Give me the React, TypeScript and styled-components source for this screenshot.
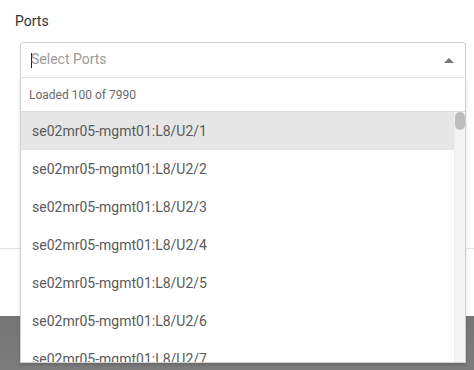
import React from 'react'
import styled, { createGlobalStyle } from 'styled-components'

const GlobalStyle = createGlobalStyle`
  html, body {
    margin: 0;
    padding: 0;
    background: #fff;
    font-family: Roboto, "Liberation Sans", sans-serif;
  }
`

const SPage = styled.div`
  width: 474px;
  height: 370px;
  overflow: hidden;
  display: flex;
  flex-direction: column;
  background: linear-gradient(#4b4b4b, #7c7c7c);
`

const SModal = styled.div`
  background: #fff;
  display: flex;
  flex-direction: column;
`

const SBody = styled.div`
  height: 249px;
  box-sizing: border-box;
  padding: 13px 8px 0 15px;
  border-bottom: 1px solid #e3e3e3;
`

const SFooter = styled.div`
  height: 67px;
`

const SLabel = styled.div`
  font-size: 14px;
  color: #333;
  line-height: 16px;
  margin-bottom: 13px;
`

const SField = styled.div`
  position: relative;
  margin-left: 5px;
  width: 446px;
`

const SControl = styled.div`
  height: 36px;
  box-sizing: border-box;
  border: 1px solid #cfcfcf;
  border-bottom-color: #e2e2e2;
  border-radius: 4px 4px 0 0;
  display: flex;
  align-items: center;
  padding: 0 11px 3px 10px;
`

const SCaret = styled.span`
  width: 1px;
  height: 15px;
  background: #222;
  margin: 3px -1px 0 0;
`

const SPlaceholder = styled.span`
  flex: 1;
  font-size: 14px;
  color: #9a9a9a;
`

const SArrow = styled.span`
  width: 0;
  height: 0;
  margin-top: 3px;
  border-left: 5px solid transparent;
  border-right: 5px solid transparent;
  border-bottom: 5px solid #777;
`

const SMenu = styled.div`
  position: absolute;
  top: 36px;
  left: 0;
  right: 0;
  height: 285px;
  background: #fff;
  box-sizing: border-box;
  border: 1px solid #cfcfcf;
  border-top: none;
  display: flex;
  flex-direction: column;
  box-shadow: 0 2px 3px rgba(0, 0, 0, 0.15);
`

const SMenuHeader = styled.div`
  height: 33px;
  flex: none;
  border-bottom: 1px solid #dcdcdc;
  display: flex;
  align-items: center;
  padding-left: 8px;
  font-size: 12px;
  color: #6a6a6a;
`

const SListWrap = styled.div`
  flex: 1;
  display: flex;
  overflow: hidden;
`

const SList = styled.div`
  flex: 1;
  display: flex;
  flex-direction: column;
`

const SOption = styled.div<{ $active?: boolean }>`
  height: 38px;
  flex: none;
  display: flex;
  align-items: center;
  padding-left: 11px;
  font-size: 14px;
  color: #5a5a5a;
  background: ${p => (p.$active ? '#e6e6e6' : '#fff')};
`

const STrack = styled.div`
  width: 10px;
  flex: none;
  background: #f4f4f4;
  border-left: 1px solid #ededed;
  display: flex;
  flex-direction: column;
`

const SThumb = styled.div`
  height: 18px;
  border-radius: 5px;
  background: #bdbdbd;
`

const ports = [1, 2, 3, 4, 5, 6, 7].map(n => `se02mr05-mgmt01:L8/U2/${n}`)

const App = () => {
  return (
    <>
      <GlobalStyle />
      <SPage>
        <SModal>
          <SBody>
            <SLabel>Ports</SLabel>
            <SField>
              <SControl>
                <SCaret />
                <SPlaceholder>Select Ports</SPlaceholder>
                <SArrow />
              </SControl>
              <SMenu>
                <SMenuHeader>Loaded 100 of 7990</SMenuHeader>
                <SListWrap>
                  <SList>
                    {ports.map((p, i) => (
                      <SOption key={p} $active={i === 0}>{p}</SOption>
                    ))}
                  </SList>
                  <STrack>
                    <SThumb />
                  </STrack>
                </SListWrap>
              </SMenu>
            </SField>
          </SBody>
          <SFooter />
        </SModal>
      </SPage>
    </>
  )
}

export default App
